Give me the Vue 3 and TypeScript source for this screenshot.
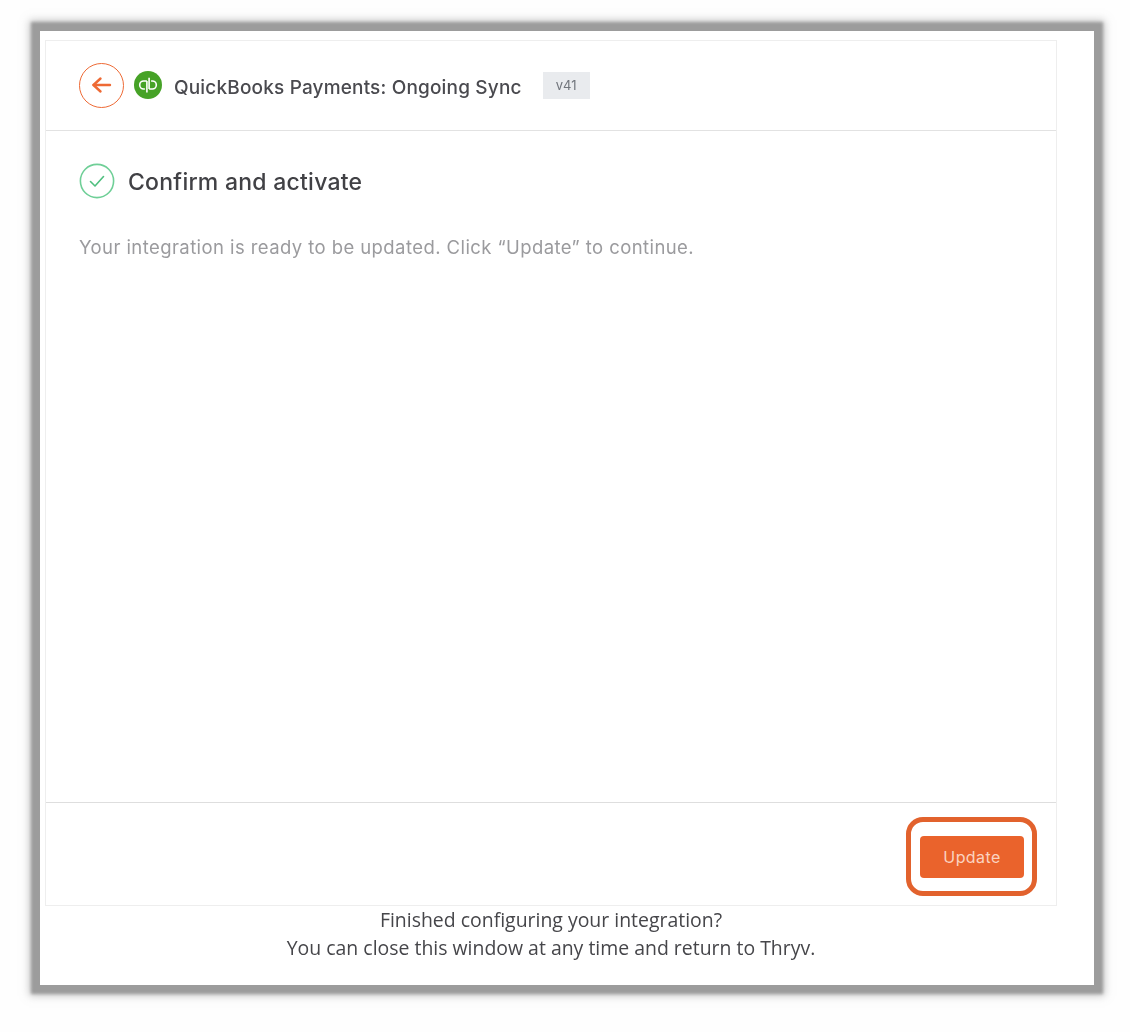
<template>
  <div class="page">
    <div class="frame">
      <div class="card">
        <header class="card-header">
          <button class="back-btn" type="button" aria-label="Back">
            <svg width="22" height="22" viewBox="0 0 22 22" fill="none" stroke="#ee6a35" stroke-width="2.4" stroke-linecap="round" stroke-linejoin="round">
              <path d="M2.5 11H19" />
              <path d="M9.5 4.5L2.5 11L9.5 17.5" />
            </svg>
          </button>
          <svg class="qb-logo" width="28" height="28" viewBox="0 0 28 28" fill="none" stroke="#fff" stroke-width="1.6">
            <circle cx="14" cy="14" r="14" fill="#46a227" stroke="none" />
            <path d="M12.9 10H9.7a4 4 0 0 0 0 8h1.2" />
            <path d="M12.9 10V21.6" />
            <path d="M15.1 18h3.2a4 4 0 0 0 0-8h-1.2" />
            <path d="M15.1 6.8V18" />
          </svg>
          <span class="integration-name">{{ integrationName }}</span>
          <span class="version">{{ version }}</span>
        </header>

        <main class="card-body">
          <div class="step-title">
            <svg width="36" height="36" viewBox="0 0 36 36" fill="none">
              <circle cx="18" cy="18" r="16.6" stroke="#6fcf97" stroke-width="1.6" />
              <path d="M11.5 18.5L16 23L24.5 13.5" stroke="#4fbf7f" stroke-width="1.6" stroke-linecap="round" stroke-linejoin="round" />
            </svg>
            <h1>Confirm and activate</h1>
          </div>
          <p class="step-text">Your integration is ready to be updated. Click “Update” to continue.</p>
        </main>

        <footer class="card-footer">
          <button class="update-btn" type="button">Update</button>
          <span class="highlight"></span>
        </footer>
      </div>

      <div class="closing-note">
        <div>Finished configuring your integration?</div>
        <div>You can close this window at any time and return to Thryv.</div>
      </div>
    </div>
  </div>
</template>

<script setup lang="ts">
const integrationName = 'QuickBooks Payments: Ongoing Sync'
const version = 'v41'
</script>

<style>
html,
body {
  margin: 0;
  background: #fefefe;
}
</style>

<style scoped>
.page {
  width: 1130px;
  height: 1032px;
  padding: 31px 36px 0 40px;
  box-sizing: border-box;
}

.frame {
  width: 1054px;
  height: 954px;
  background: #fff;
  box-sizing: border-box;
  padding: 9px 37px 0 5px;
  box-shadow: 0 0 3px 9px #9c9c9c, 0 0 8px 11px rgba(156, 156, 156, 0.5);
  filter: blur(0.4px);
}

.card {
  height: 866px;
  box-sizing: border-box;
  border: 1px solid #eeeeee;
  display: flex;
  flex-direction: column;
}

.card-header {
  height: 90px;
  flex-shrink: 0;
  box-sizing: border-box;
  border-bottom: 1px solid #e2e2e2;
  display: flex;
  align-items: center;
  padding: 0 0 1px 33px;
  font-family: Inter, "Liberation Sans", sans-serif;
}

.back-btn {
  width: 45px;
  height: 45px;
  border: 1.5px solid #ee6a35;
  border-radius: 50%;
  background: #fff;
  padding: 0;
  display: flex;
  align-items: center;
  justify-content: center;
}

.qb-logo {
  margin-left: 10px;
}

.integration-name {
  margin: 4px 0 0 12px;
  font-size: 19px;
  letter-spacing: 0.17px;
  font-weight: 500;
  color: #4a4a4f;
}

.version {
  margin: 0 0 0 21px;
  width: 47px;
  height: 27px;
  background: #e9ebee;
  color: #71757c;
  font-size: 13px;
  display: flex;
  align-items: center;
  justify-content: center;
}

.card-body {
  flex: 1;
  padding: 32px 33px 0;
  font-family: Inter, "Liberation Sans", sans-serif;
}

.step-title {
  display: flex;
  align-items: center;
  gap: 13px;
}

.step-title h1 {
  margin: 1px 0 0;
  font-size: 23px;
  letter-spacing: 0.25px;
  font-weight: 500;
  color: #414145;
}

.step-text {
  margin: 37px 0 0;
  font-size: 18.5px;
  letter-spacing: 0.42px;
  color: #9b9b9e;
}

.card-footer {
  height: 103px;
  flex-shrink: 0;
  box-sizing: border-box;
  border-top: 1px solid #dedede;
  position: relative;
  display: flex;
  justify-content: flex-end;
  padding: 33px 32px 0 0;
}

.update-btn {
  width: 104px;
  height: 42px;
  border: none;
  border-radius: 4px;
  background: #ea632c;
  color: #fbd3c0;
  font-family: Inter, "Liberation Sans", sans-serif;
  font-size: 16px;
  letter-spacing: 0.4px;
  padding: 0;
}

.highlight {
  position: absolute;
  right: 19px;
  top: 14px;
  width: 131px;
  height: 79px;
  box-sizing: border-box;
  border: 5px solid #e2622d;
  border-radius: 17px;
}

.closing-note {
  width: 1012px;
  text-align: center;
  font-family: "Open Sans", "Noto Sans", sans-serif;
  font-size: 19.45px;
  line-height: 27.5px;
  color: #46464a;
}
</style>
